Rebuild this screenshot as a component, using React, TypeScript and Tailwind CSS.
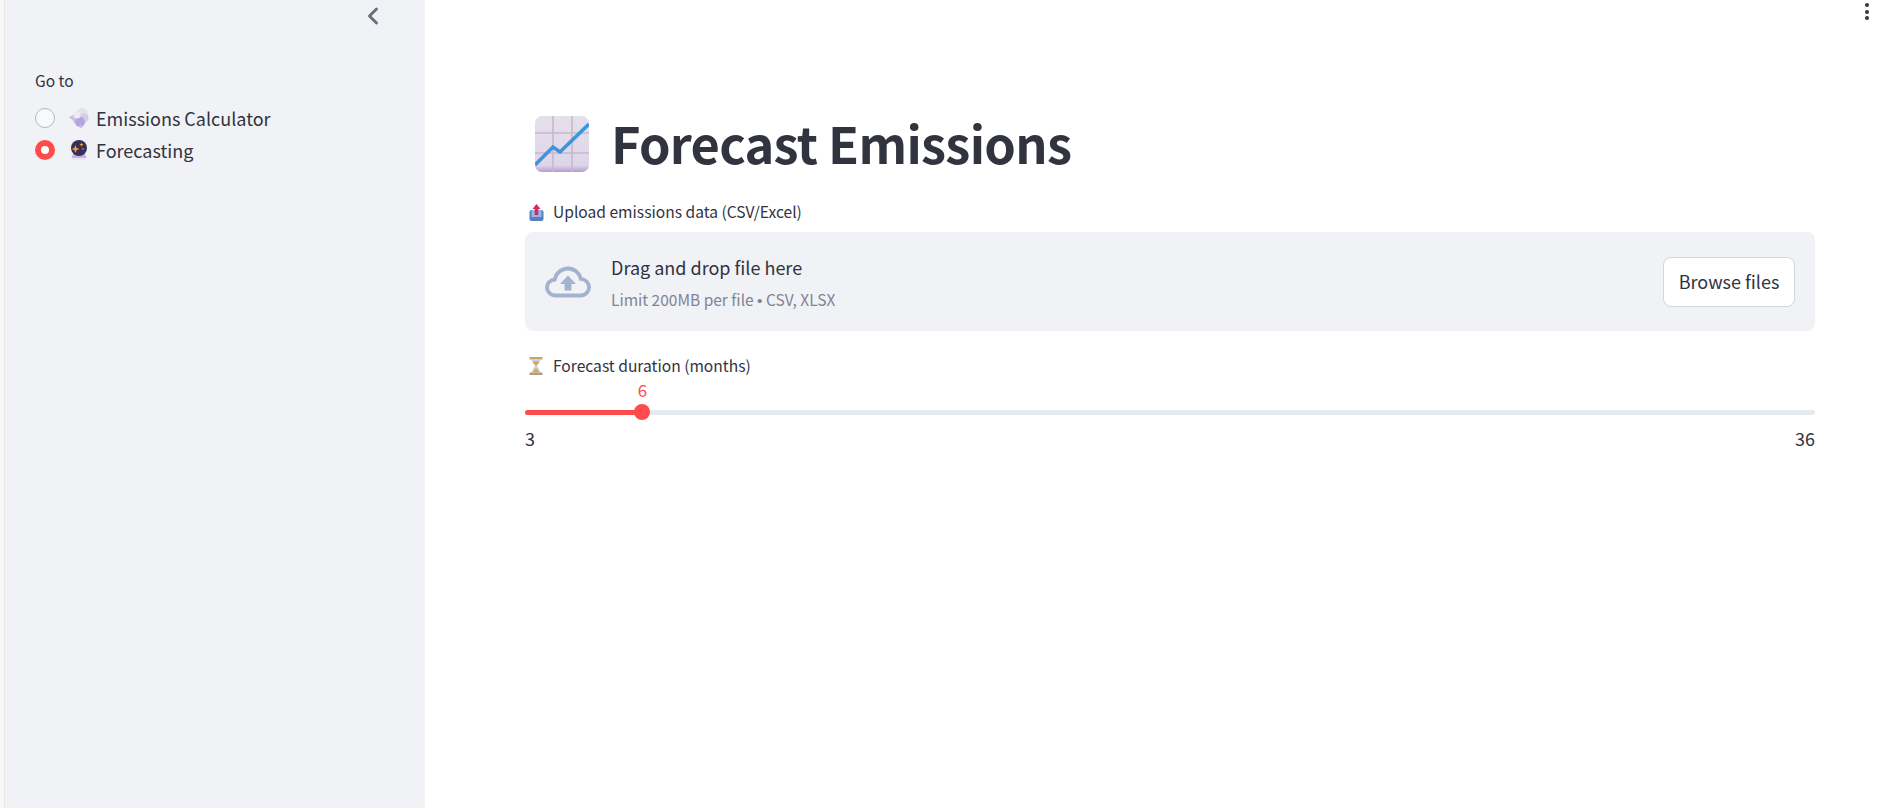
import { ChevronLeft } from 'lucide-react';

const font = { fontFamily: '"Noto Sans CJK SC", "Noto Sans", sans-serif' };

function SmokeEmoji() {
  return (
    <svg width="20" height="20" viewBox="0 0 20 20">
      <path d="M0 9.5 L4 7 L6 9.5 L4 12 Z" fill="#c6bcd6" />
      <circle cx="9" cy="10" r="6" fill="#cdc5e0" />
      <circle cx="13" cy="6" r="6" fill="#e4e0ee" />
      <circle cx="15" cy="10" r="4.5" fill="#d3cce2" />
      <circle cx="11" cy="14" r="5" fill="#b3a4e2" />
      <circle cx="12" cy="18.5" r="1.5" fill="#c8bcec" />
      <circle cx="8" cy="7" r="3.5" fill="#eeebf4" />
    </svg>
  );
}

function CrystalBall() {
  return (
    <svg width="20" height="20" viewBox="0 0 20 20">
      <path d="M4 14 H16 L17.5 18 H2.5 Z" fill="#c7b0e8" />
      <rect x="2.5" y="18" width="15" height="2" rx="1" fill="#ece6f4" />
      <circle cx="10" cy="8" r="8" fill="#3a2f52" />
      <path d="M6.5 5 L7.6 7.9 L10.5 9 L7.6 10.1 L6.5 13 L5.4 10.1 L2.5 9 L5.4 7.9 Z" fill="#eda93a" />
      <path d="M12.5 2.5 L13.1 4 L14.6 4.6 L13.1 5.2 L12.5 6.7 L11.9 5.2 L10.4 4.6 L11.9 4 Z" fill="#eda93a" />
      <circle cx="14" cy="9" r="1" fill="#8e7ab0" />
    </svg>
  );
}

function ChartEmoji() {
  return (
    <svg width="54" height="56" viewBox="0 0 54 56">
      <defs>
        <linearGradient id="chartBg" x1="0" y1="0" x2="0" y2="1">
          <stop offset="0" stopColor="#e6e0ea" />
          <stop offset="0.88" stopColor="#dfd5ea" />
          <stop offset="1" stopColor="#b39fcb" />
        </linearGradient>
      </defs>
      <rect x="0" y="0" width="54" height="56" rx="7" fill="url(#chartBg)" />
      <path d="M18 0 V56 M37 0 V56 M0 17 H54 M0 37 H54" stroke="#c3bacb" strokeWidth="1.6" />
      <path d="M0 49 L18 31 L25 36 L54 8" fill="none" stroke="#3a97de" strokeWidth="3.6" />
    </svg>
  );
}

function InboxEmoji() {
  return (
    <svg width="15" height="17" viewBox="0 0 15 17">
      <rect x="0.5" y="6" width="14" height="11" rx="2" fill="#5a7fc0" />
      <rect x="2.5" y="6" width="10" height="7" fill="#8fb8e8" />
      <path d="M7.5 0 L11.5 5 H9.3 V11 H5.7 V5 H3.5 Z" fill="#d9285a" />
    </svg>
  );
}

function HourglassEmoji() {
  return (
    <svg width="14" height="18" viewBox="0 0 14 18">
      <rect x="0.5" y="0" width="13" height="2.5" fill="#c9a47a" />
      <rect x="0.5" y="15.5" width="13" height="2.5" fill="#b59a80" />
      <path d="M2 2.5 H12 L8 9 L12 15.5 H2 L6 9 Z" fill="#b9d6ee" />
      <path d="M3.5 4.5 H10.5 L7 9 Z M3.5 15.5 L7 11 L10.5 15.5 Z" fill="#ee9f3c" />
    </svg>
  );
}

function CloudUpload() {
  return (
    <svg width="46" height="32" viewBox="0 0 46 32" fill="none">
      <path
        d="M11 29.5 C5.5 29.5 2 25.8 2 21.5 C2 17 5.5 13.8 9.8 13.5 C11 7 16.5 2.5 23 2.5 C29.5 2.5 34.5 7 35.8 12.8 C40.5 13 44 16.8 44 21.3 C44 26 40.5 29.5 35.5 29.5 Z"
        stroke="#a3b2cf"
        strokeWidth="3.8"
      />
      <path d="M23 9.5 L31 18 H26.5 V24.5 H19.5 V18 H15 Z" fill="#a3b2cf" />
    </svg>
  );
}

function Radio({ label, checked, icon }: { label: string; checked?: boolean; icon: React.ReactNode }) {
  return (
    <div className="flex items-center h-5">
      {checked ? (
        <span className="w-5 h-5 rounded-full bg-[#ff4b4b] flex items-center justify-center">
          <span className="w-2 h-2 rounded-full bg-white" />
        </span>
      ) : (
        <span className="w-5 h-5 rounded-full border border-[#b4b6bc] bg-[#f8f9fb]" />
      )}
      <span className="ml-[14px] mr-[7px]">{icon}</span>
      <span className="text-[18px] text-[#31333f]">{label}</span>
    </div>
  );
}

export default function App() {
  return (
    <div className="flex h-screen bg-white overflow-hidden" style={font}>
      <div className="w-[5px] border-r border-[#e6e6e6] bg-[#f8f8f8]" />
      <aside className="w-[420px] bg-[#f0f2f6] flex flex-col pl-[30px] pr-5">
        <div className="flex justify-end pt-[2px] pr-[18px]">
          <ChevronLeft className="w-7 h-7 text-[#6b6f7b]" strokeWidth={2.6} />
        </div>
        <p className="mt-[40px] text-[15.5px] text-[#31333f] leading-5">Go to</p>
        <div className="mt-[18px] flex flex-col gap-3">
          <Radio label="Emissions Calculator" icon={<SmokeEmoji />} />
          <Radio label="Forecasting" checked icon={<CrystalBall />} />
        </div>
      </aside>
      <main className="flex-1 relative pl-[100px] pr-[87px] text-[#31333f]">
        <div className="absolute right-[33px] top-[3px] flex flex-col gap-[2.5px]">
          <span className="w-[4px] h-[4px] rounded-full bg-[#31333f]" />
          <span className="w-[4px] h-[4px] rounded-full bg-[#31333f]" />
          <span className="w-[4px] h-[4px] rounded-full bg-[#31333f]" />
        </div>
        <div className="mt-[116px] flex items-center pl-[10px] h-14">
          <ChartEmoji />
          <h1 className="ml-[22px] pb-[4px] text-[50.5px] leading-none font-bold tracking-[-0.7px] text-[#31333f]">Forecast Emissions</h1>
        </div>
        <div className="mt-[30px] flex items-center h-5 pl-[4px] text-[15.6px]">
          <InboxEmoji />
          <span className="ml-[9px]">Upload emissions data (CSV/Excel)</span>
        </div>
        <div className="mt-[10px] h-[99px] rounded-lg bg-[#f0f2f6] flex items-center pl-5 pr-5">
          <CloudUpload />
          <div className="ml-[20px] flex-1 pt-[2px]">
            <div className="text-[18px] leading-6">Drag and drop file here</div>
            <div className="mt-[10px] text-[15.5px] leading-5 text-[#808495]">
              Limit 200MB per file <span style={{ fontFamily: '"Liberation Sans", sans-serif' }}>•</span> CSV, XLSX
            </div>
          </div>
          <button className="w-[132px] h-[50px] rounded-lg border border-[#d5d6da] bg-white text-[18px]">Browse files</button>
        </div>
        <div className="mt-[25px] flex items-center h-5 pl-[4px] text-[15.6px]">
          <HourglassEmoji />
          <span className="ml-[10px]">Forecast duration (months)</span>
        </div>
        <div className="mt-[4px] w-[235px] h-5 text-center text-[17px] text-[#ff4b4b] leading-5">6</div>
        <div className="relative mt-[10px] h-[5px] rounded-full bg-[#e6eaf1]">
          <div className="h-full w-[117px] rounded-full bg-[#ff4b4b]" />
          <span className="absolute left-[109px] -top-[6px] w-4 h-4 rounded-full bg-[#ff4b4b]" />
        </div>
        <div className="mt-[13px] flex justify-between text-[18px] leading-5">
          <span>3</span>
          <span>36</span>
        </div>
      </main>
    </div>
  );
}
